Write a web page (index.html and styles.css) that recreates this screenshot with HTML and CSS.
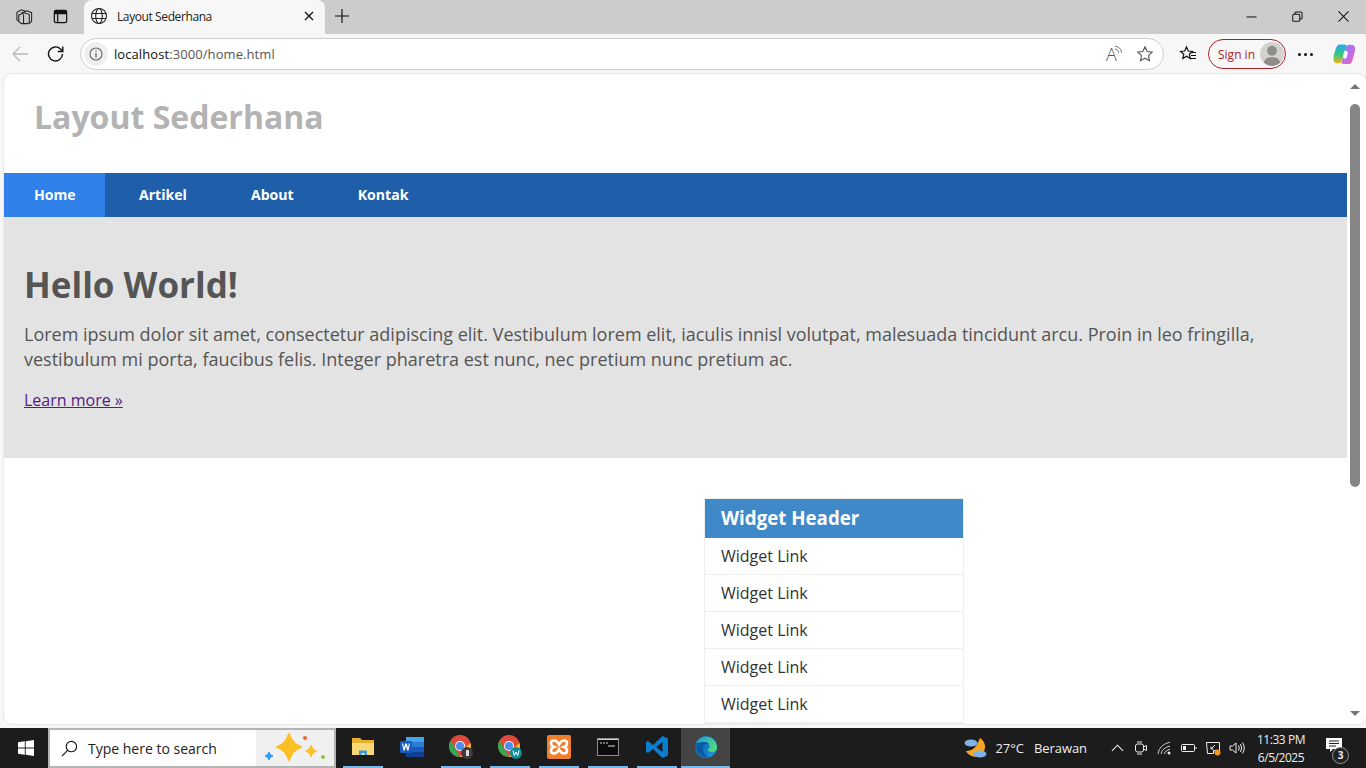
FILE: index.html
```html
<!DOCTYPE html>
<html lang="id">
<head>
<meta charset="utf-8">
<title>Layout Sederhana</title>
<link rel="stylesheet" href="styles.css">
</head>
<body>
<div class="tabstrip">
  <div class="strip-left">
    <svg class="ic20" viewBox="0 0 20 20"><g fill="none" stroke="#222" stroke-width="1.1"><path d="M6.500 6.500l6-2.500 5 2v9l-2.500 2.500"/><path d="M4 8.500l6-2.500 5 2v8.500l-2 1H7l-3-2z" fill="#ccc"/><path d="M2 5.500l5-2.500 4 1.500M2 5.500v8l2 1.500"/><path d="M9 8v10"/></g></svg>
    <svg class="ic20" viewBox="0 0 20 20"><g fill="none" stroke="#111" stroke-width="1.3"><rect x="3.500" y="3.500" width="13" height="13" rx="2"/><path d="M3.500 7h13M7 7v9.500"/></g><rect x="3.500" y="3.500" width="13" height="3.500" fill="#111"/></svg>
  </div>
  <div class="tab">
    <svg class="globe" viewBox="0 0 18 18"><g fill="none" stroke="#222" stroke-width="1.100"><circle cx="9" cy="9" r="7.500"/><ellipse cx="9" cy="9" rx="3.300" ry="7.500"/><path d="M2 6.500h14M2 11.500h14"/></g></svg>
    <span class="tab-title">Layout Sederhana</span>
    <svg class="tab-x" viewBox="0 0 10 10"><path d="M1 1l8 8M9 1l-8 8" stroke="#111" stroke-width="1.300"/></svg>
  </div>
  <svg class="plus" viewBox="0 0 14 14"><path d="M7 0v14M0 7h14" stroke="#111" stroke-width="1.200"/></svg>
  <div class="win-controls">
    <svg viewBox="0 0 12 12"><path d="M.5 6.500h11" stroke="#111" stroke-width="1.100"/></svg>
    <svg viewBox="0 0 12 12"><g fill="none" stroke="#111" stroke-width="1.100"><rect x=".8" y="3.500" width="7.700" height="7.700" rx="1.200"/><path d="M3.200 3.500V2.300q0-1.300 1.300-1.300h5.200q1.300 0 1.300 1.300v5.200q0 1.300-1.300 1.300h-1.200"/></g></svg>
    <svg viewBox="0 0 12 12"><path d="M.5.500l11 11M11.500.500l-11 11" stroke="#111" stroke-width="1.100"/></svg>
  </div>
</div>
<div class="toolbar">
  <svg class="back" viewBox="0 0 18 18"><path d="M17 9H2M9 2L2 9l7 7" fill="none" stroke="#b9b9b9" stroke-width="1.300"/></svg>
  <svg class="reload" viewBox="0 0 18 18"><g fill="none" stroke="#111" stroke-width="1.400"><path d="M15.500 9a7 7 0 1 1-2-5l2 2"/><path d="M15.800 1.500v5h-5"/></g></svg>
  <div class="address">
    <span class="info"><svg viewBox="0 0 14 14"><circle cx="7" cy="7" r="6" fill="none" stroke="#666" stroke-width="1.100"/><path d="M7 6v4.500M7 3.500v1.300" stroke="#666" stroke-width="1.300"/></svg></span>
    <span class="url"><b>localhost</b>:3000/home.html</span>
    <span class="read">A<svg viewBox="0 0 8 8"><path d="M1 1q5 .8 6 6M1 3.500q2.500.4 3.400 3.500" fill="none" stroke="#666" stroke-width=".8"/></svg></span>
    <svg class="star" viewBox="0 0 18 18"><path d="M9 1.800l2.200 4.700 5 .6-3.700 3.500 1 5.100L9 13.200l-4.500 2.500 1-5.100L1.800 7.100l5-.6z" fill="none" stroke="#555" stroke-width="1.100"/></svg>
  </div>
  <svg class="favs" viewBox="0 0 18 18"><g fill="none" stroke="#111" stroke-width="1.200"><path d="M7.500 2l1.800 4 4.200.4-3.200 2.900 1 4.200-3.800-2.300-3.700 2.300 1-4.200L1.500 6.400l4.200-.4z"/></g><path d="M12 7.500h5M12 10.500h5M11 13.500h6" stroke="#111" stroke-width="1.100"/></svg>
  <div class="signin"><span>Sign in</span><span class="avatar"><svg viewBox="0 0 22 22"><circle cx="11" cy="11" r="11" fill="#d4d2cf"/><circle cx="11" cy="8" r="4.500" fill="#8e8c8a"/><path d="M3.500 19c1-4 4-5 7.500-5s6.500 1 7.500 5q-3.500 3-7.500 3t-7.500-3z" fill="#8e8c8a"/></svg></span></div>
  <div class="dots"><i></i><i></i><i></i></div>
  <svg class="copilot" viewBox="0 0 24 24"><defs><linearGradient id="cpa" x1="0" y1="0" x2="0" y2="1"><stop offset="0" stop-color="#2aa9ee"/><stop offset=".55" stop-color="#37c77f"/><stop offset="1" stop-color="#f5b21c"/></linearGradient><linearGradient id="cpb" x1="0" y1="0" x2="1" y2="1"><stop offset="0" stop-color="#6f84f2"/><stop offset=".6" stop-color="#c86ae6"/><stop offset="1" stop-color="#f4677f"/></linearGradient></defs><path d="M17 23h-6q-2 0-1.500-2L14 5q.8-3 3.500-3H20q4 0 4 4 0 5-2 10-1.500 7-5 7z" fill="url(#cpb)"/><path d="M7.500 1.500h5.500q2 0 1.500 2L10 19q-.8 3-3.500 3H4.500Q.500 22 .500 18q0-5 2-10Q4 1.500 7.500 1.500z" fill="url(#cpa)"/><path d="M9 23l8-.2q-2 .4-3.500-.3-2-1-4.500.5z" fill="#f58a2a"/><path d="M14.500 8.500q2 .5 1.500 3l-1 4q-.8 2-3 1.500-1.500-.5-1-3l1-4q.6-2 2.500-1.500z" fill="#fff"/></svg>
</div>
<div class="viewport-wrap">
  <div class="viewport">
    <div class="page">
      <header class="site-header"><h1>Layout Sederhana</h1></header>
      <nav class="site-nav">
        <a class="active">Home</a><a>Artikel</a><a>About</a><a>Kontak</a>
      </nav>
      <section class="hero">
        <h2>Hello World!</h2>
        <p>Lorem ipsum dolor sit amet, consectetur adipiscing elit. Vestibulum lorem elit, iaculis innisl volutpat, malesuada tincidunt arcu. Proin in leo fringilla, vestibulum mi porta, faucibus felis. Integer pharetra est nunc, nec pretium nunc pretium ac.</p>
        <a class="more">Learn more »</a>
      </section>
      <div class="content">
        <aside class="widget">
          <h3>Widget Header</h3>
          <a>Widget Link</a><a>Widget Link</a><a>Widget Link</a><a>Widget Link</a><a>Widget Link</a>
        </aside>
      </div>
    </div>
    <div class="scrollbar">
      <span class="arrow up"></span>
      <div class="track"><div class="thumb"></div></div>
      <span class="arrow down"></span>
    </div>
  </div>
</div>
<footer class="taskbar">
  <div class="start"><svg viewBox="0 0 16 16"><path d="M0 2.300l6.800-1v6.300H0zM7.700 1.200L16 0v7.600H7.700zM0 8.400h6.800v6.300L0 13.700zM7.700 8.400H16V16l-8.300-1.200z" fill="#fff"/></svg></div>
  <div class="search">
    <svg class="lens" viewBox="0 0 18 18"><g fill="none" stroke="#111" stroke-width="1.200"><circle cx="11" cy="7" r="5.500"/><path d="M7 11l-6 6"/></g></svg>
    <span class="search-text">Type here to search</span>
    <div class="spark"><svg viewBox="0 0 78 36"><path d="M33 4q3 10 12 13-9 3-12 13-3-10-12-13 9-3 12-13z" fill="#fbbf24" stroke="#fbbf24" stroke-width="2" stroke-linejoin="round"/><path d="M55 15q1 5 5.500 6-4.500 1-5.500 6-1-5-5.500-6 4.500-1 5.500-6z" fill="#fbbf24" stroke="#fbbf24" stroke-linejoin="round"/><path d="M13 22q.5 3 4 4-3.500 1-4 4-.5-3-4-4 3.500-1 4-4z" fill="#2a9df4" stroke="#2a9df4" stroke-linejoin="round"/><circle cx="49" cy="8" r="2" fill="#f0642c"/><circle cx="67" cy="27" r="2" fill="#8cc63f"/></svg></div>
  </div>
  <div class="apps">
    <div class="app run"><svg viewBox="0 0 24 24"><path d="M1 3h8l2 2h12v15H1z" fill="#e8b030"/><path d="M1 8h22v12H1z" fill="#f9d976"/><path d="M8 20v-4.500h8V20h-2.500v-2h-3v2z" fill="#3a96dd"/></svg></div>
    <div class="app"><svg viewBox="0 0 24 24"><rect x="6" y="2" width="18" height="20" rx="1" fill="#2b7cd3"/><rect x="6" y="2" width="18" height="5" fill="#41a5ee"/><rect x="6" y="12" width="18" height="5" fill="#185abd"/><rect x="6" y="17" width="18" height="5" fill="#103f91"/><rect x="0" y="6" width="12" height="12" rx="1" fill="#1a5bbf"/><path d="M2 8.500l1.500 7h1.300L6 11l1.200 4.500h1.300l1.500-7H8.800l-.8 4.500-1.200-4.500H5.200L4 13 3.200 8.500z" fill="#fff"/></svg></div>
    <div class="app run"><svg viewBox="0 0 24 24"><circle cx="11" cy="11" r="11" fill="#e04a3c"/><path d="M11 22A11 11 0 0 1 1.500 5.500L7 15z" fill="#31a852"/><path d="M11 22L16.500 12.500 21.500 8A11 11 0 0 1 11 22z" fill="#fbc02d"/><circle cx="11" cy="11" r="5" fill="#fff"/><circle cx="11" cy="11" r="4" fill="#4a8cf0"/><circle cx="18" cy="18" r="6" fill="#3c3c3c"/><path d="M17 15h3v6h-3z" fill="#ddd"/></svg></div>
    <div class="app run"><svg viewBox="0 0 24 24"><circle cx="11" cy="11" r="11" fill="#e04a3c"/><path d="M11 22A11 11 0 0 1 1.500 5.500L7 15z" fill="#31a852"/><path d="M11 22L16.500 12.500 21.500 8A11 11 0 0 1 11 22z" fill="#fbc02d"/><circle cx="11" cy="11" r="5" fill="#fff"/><circle cx="11" cy="11" r="4" fill="#4a8cf0"/><circle cx="18" cy="18" r="6" fill="#0c8d99"/><path d="M15 15.500l1.300 5 1.700-3.500 1.700 3.500 1.300-5" fill="none" stroke="#fff"/></svg></div>
    <div class="app run"><svg viewBox="0 0 24 24"><rect width="24" height="24" rx="2" fill="#ee7f2d"/><g fill="none" stroke="#fff" stroke-width="2.600"><path d="M7 5.500q-3 0-3 3 0 2.500 3 3.500-3 1-3 3.500 0 3 3 3 3 0 5-4 2 4 5 4 3 0 3-3 0-2.500-3-3.500 3-1 3-3.500 0-3-3-3-3 0-5 4-2-4-5-4z"/></g></svg></div>
    <div class="app run"><svg viewBox="0 0 24 24"><rect x="1.500" y="3.500" width="21" height="17" fill="#0c0c0c" stroke="#8c8c8c"/><path d="M2 4.500h20" stroke="#d8d8d8"/><path d="M4 8h2M7 8h2M10 8h2M12 11h7" stroke="#ddd" stroke-width="1.200"/></svg></div>
    <div class="app run"><svg viewBox="0 0 24 24"><path d="M17.500 1L23 3.500v17L17.500 23 8 14l-5 4-2-1V7l2-1 5 4zM17.500 7L11 12l6.500 5z" fill="#0a7fd0"/></svg></div>
    <div class="app current"><svg viewBox="0 0 24 24"><defs><linearGradient id="edg" x1="0" y1="0" x2="1" y2=".6"><stop offset="0" stop-color="#1e9ad6"/><stop offset="1" stop-color="#4fdc7e"/></linearGradient><linearGradient id="edb" x1="0" y1="0" x2="1" y2="1"><stop offset="0" stop-color="#0b4f93"/><stop offset="1" stop-color="#1f9fe8"/></linearGradient></defs><circle cx="12" cy="12" r="11" fill="url(#edb)"/><path d="M2 8A11 11 0 0 1 23 12q0 5-5 5-4 0-4.500-2.500 2.500-1 2-3.500Q14.500 7 10 7 5 7 2 8z" fill="url(#edg)"/><path d="M3 15q0-7 7-8 4 0 5 2-5-1-6 3-1 6 6 10.500Q6 23 3 15z" fill="#0a5aa8"/></svg></div>
  </div>
  <div class="weather">
    <svg viewBox="0 0 26 24"><path d="M17 2a10 10 0 1 1-14 13q9 1 14-13z" fill="#f6a623"/><ellipse cx="8" cy="7" rx="6.500" ry="3.500" fill="#7fb2e8"/><ellipse cx="17" cy="18" rx="6.500" ry="3.500" fill="#7fb2e8"/></svg>
    <span class="temp">27°C</span><span class="cond">Berawan</span>
  </div>
  <div class="tray">
    <svg class="t-chev" viewBox="0 0 14 8"><path d="M1 7l6-6 6 6" fill="none" stroke="#eee" stroke-width="1.200"/></svg>
    <svg class="t-ic" viewBox="0 0 16 16"><g fill="none" stroke="#eee"><rect x="2.500" y="4" width="8" height="8" rx="2"/><path d="M10.500 7l3-1.500v5l-3-1.500M4 2h5M4 14h5"/></g></svg>
    <svg class="t-ic" viewBox="0 0 16 16"><g fill="none" stroke="#ccc"><path d="M1 14Q2 5 13 2M4 14q1-6 9-8M7 14q.5-3 6-5"/></g><circle cx="12" cy="13" r="1.500" fill="#eee"/></svg>
    <svg class="t-ic" viewBox="0 0 16 16"><g fill="none" stroke="#eee"><rect x=".5" y="4.500" width="13" height="7" rx="1"/><path d="M15 7v2"/></g><rect x="2" y="6" width="3" height="4" fill="#eee"/></svg>
    <svg class="t-ic" viewBox="0 0 16 16"><g fill="none" stroke="#eee"><path d="M1.500 2.500h13v8h-6v3h-6z"/><path d="M6 9l4-4M6 6.500V9h2.500"/></g><circle cx="12.500" cy="12.500" r="3" fill="#f59a1b"/></svg>
    <svg class="t-ic" viewBox="0 0 16 16"><g fill="none" stroke="#eee"><path d="M1 6h2.500L7 3v10L3.500 10H1z"/><path d="M9.500 5.500q1.500 2.500 0 5M11.500 4q2.500 4 0 8M13.500 2.500q3.500 5.500 0 11"/></g></svg>
  </div>
  <div class="clock"><span>11:33 PM</span><span>6/5/2025</span></div>
  <div class="notif">
    <svg viewBox="0 0 18 16"><path d="M1 1h16v11H8l-3 3v-3H1z" fill="#fff"/><path d="M4 4h10M4 6.500h10M4 9h7" stroke="#222"/></svg>
    <span class="badge">3</span>
  </div>
</footer>
</body>
</html>
```
FILE: styles.css
```css
* { box-sizing: border-box; }
html, body { margin: 0; height: 100%; overflow: hidden; }
body { width: 1366px; height: 768px; display: flex; flex-direction: column; background: #f7f7f7; font-family: "Open Sans", sans-serif; }
svg { display: block; flex: none; }

.tabstrip { height: 34px; flex: none; background: #cccccc; display: flex; align-items: stretch; }
.strip-left { width: 84px; display: flex; align-items: center; gap: 17px; padding: 0 0 2px 15px; }
.ic20 { width: 19px; height: 19px; }
.tab { width: 241px; background: #f7f7f7; border-radius: 8px 8px 0 0; display: flex; align-items: center; padding: 0 11px 2px 6px; }
.globe { width: 18px; height: 18px; }
.tab-title { font: 12px "Open Sans", sans-serif; color: #222; margin-left: 9px; flex: 1; letter-spacing: -.4px; }
.tab-x { width: 10px; height: 10px; }
.plus { width: 14px; height: 14px; margin: 9px 0 0 10px; }
.win-controls { margin-left: auto; display: flex; align-items: center; padding: 0 17px 2px 0; gap: 35px; }
.win-controls svg { width: 11px; height: 11px; }

.toolbar { height: 40px; flex: none; background: #f7f7f7; display: flex; align-items: center; }
.back { width: 18px; height: 18px; margin-left: 11px; }
.reload { width: 18px; height: 18px; margin-left: 18px; }
.address { width: 1084px; height: 32px; margin-left: 15px; background: #fff; border: 1px solid #cfcfcf; border-radius: 16px; display: flex; align-items: center; padding: 0 8px 0 3px; }
.info { width: 24px; height: 24px; border-radius: 50%; background: #efefef; display: flex; align-items: center; justify-content: center; }
.info svg { width: 14px; height: 14px; }
.url { font-size: 13px; color: #555; margin-left: 6px; flex: 1; letter-spacing: .08px; }
.url b { font-weight: 400; color: #111; }
.read { font-size: 18px; font-weight: 300; color: #555; display: flex; align-items: flex-start; width: 20px; margin-right: 10px; line-height: 18px; }
.read svg { width: 9px; height: 9px; margin: 0 0 0 -3px; }
.star { width: 18px; height: 18px; margin-right: 1px; }
.favs { width: 18px; height: 18px; margin-left: 15px; }
.signin { width: 78px; height: 30px; margin-left: 11px; border: 1px solid #b01e23; border-radius: 15px; display: flex; align-items: center; padding-left: 9px; font-size: 12px; color: #b01e23; justify-content: space-between; padding-right: 1px; }
.avatar { width: 24px; height: 24px; }
.avatar svg { width: 24px; height: 24px; }
.dots { display: flex; gap: 3px; margin-left: 12px; }
.dots i { width: 3px; height: 3px; border-radius: 50%; background: #111; }
.copilot { width: 22px; height: 22px; margin-left: 20px; }

.viewport-wrap { height: 650px; flex: none; padding-left: 4px; }
.viewport { width: 1362px; height: 650px; background: #fff; border-radius: 8px; display: flex; overflow: hidden; box-shadow: 0 0 2px rgba(0,0,0,.2); }
.page { width: 1343px; flex: none; overflow: hidden; }
.site-header { height: 99px; padding: 19px 0 0 30px; }
.site-header h1 { margin: 0; font-size: 32px; line-height: 47px; font-weight: 700; color: #b3b3b3; }
.site-nav { height: 44px; background: #1f5faa; display: flex; }
.site-nav a { color: #fff; font-weight: 700; font-size: 14.1px; line-height: 44px; padding: 0 30px; margin-right: 4px; }
.site-nav .active { background: #2f80e8; width: 101px; }
.hero { height: 241px; background: #e3e3e3; padding: 42px 20px 0; color: #555; }
.hero h2 { margin: 0; font-size: 35px; line-height: 52px; font-weight: 700; }
.hero p { margin: 11px 0 0; font-size: 18px; line-height: 25px; }
.more { display: block; margin-top: 16px; font-size: 16px; line-height: 25px; color: #551a8b; text-decoration: underline; }
.content { display: flex; padding: 40px 0 0 700px; }
.widget { width: 260px; border: 1px solid #eee; }
.widget h3 { margin: 0; height: 39px; background: #3f89c9; color: #fff; font-size: 18.72px; line-height: 38px; font-weight: 700; padding-left: 16px; }
.widget a { display: block; height: 37px; line-height: 36px; padding-left: 16px; font-size: 16px; color: #333; border-bottom: 1px solid #eee; }

.scrollbar { width: 19px; flex: none; display: flex; flex-direction: column; align-items: center; padding-right: 4px; }
.arrow { width: 0; height: 0; border-left: 5px solid transparent; border-right: 5px solid transparent; margin: 10px 0 6px; }
.arrow.up { border-bottom: 5px solid #777; }
.arrow.down { border-top: 5px solid #777; margin: 6px 0 8px; }
.track { flex: 1; width: 100%; display: flex; justify-content: center; padding-top: 9px; }
.thumb { width: 10px; height: 383px; border-radius: 5px; background: #858585; }

.taskbar { margin-top: 4px; height: 40px; flex: none; background: #1c1c1c; display: flex; align-items: stretch; color: #eee; }
.start { width: 48px; display: flex; align-items: center; justify-content: center; padding-left: 3px; }
.start svg { width: 16px; height: 16px; }
.search { width: 288px; background: #fff; border: 2px solid #b4b4b4; display: flex; align-items: center; }
.lens { width: 17px; height: 17px; margin-left: 11px; }
.search-text { font-size: 14px; color: #222; margin-left: 10px; flex: 1; }
.spark { width: 78px; height: 36px; background: #f0f0f0; }
.spark svg { width: 78px; height: 36px; }
.apps { display: flex; margin-left: 2px; }
.app { width: 49px; display: flex; align-items: center; justify-content: center; padding-bottom: 3px; }
.app svg { width: 24px; height: 24px; }
.app.run { background: linear-gradient(#76b9ed, #76b9ed) center bottom / 40px 2px no-repeat; }
.app.current { background: linear-gradient(#76b9ed, #76b9ed) center bottom / 100% 2px no-repeat, #444; }
.weather { margin-left: auto; display: flex; align-items: center; font-size: 13px; }
.weather svg { width: 26px; height: 24px; margin-right: 7px; }
.temp { margin-left: -1px; }
.cond { margin-left: 10px; letter-spacing: -.08px; }
.tray { display: flex; align-items: center; gap: 8px; margin-left: 24px; }
.t-chev { width: 13px; height: 8px; margin-right: 1px; }
.t-ic { width: 16px; height: 16px; }
.clock { display: flex; flex-direction: column; align-items: center; font-size: 12px; line-height: 18px; justify-content: center; margin-left: 12px; width: 48px; letter-spacing: -.45px; white-space: nowrap; padding-top: 1px; }
.notif { width: 61px; position: relative; display: flex; align-items: center; padding: 0 0 6px 20px; }
.notif svg { width: 18px; height: 16px; }
.badge { position: absolute; left: 27px; top: 19px; width: 17px; height: 17px; border-radius: 50%; border: 1px solid #999; background: #222; font-size: 10px; font-weight: 700; line-height: 15px; text-align: center; }
```
